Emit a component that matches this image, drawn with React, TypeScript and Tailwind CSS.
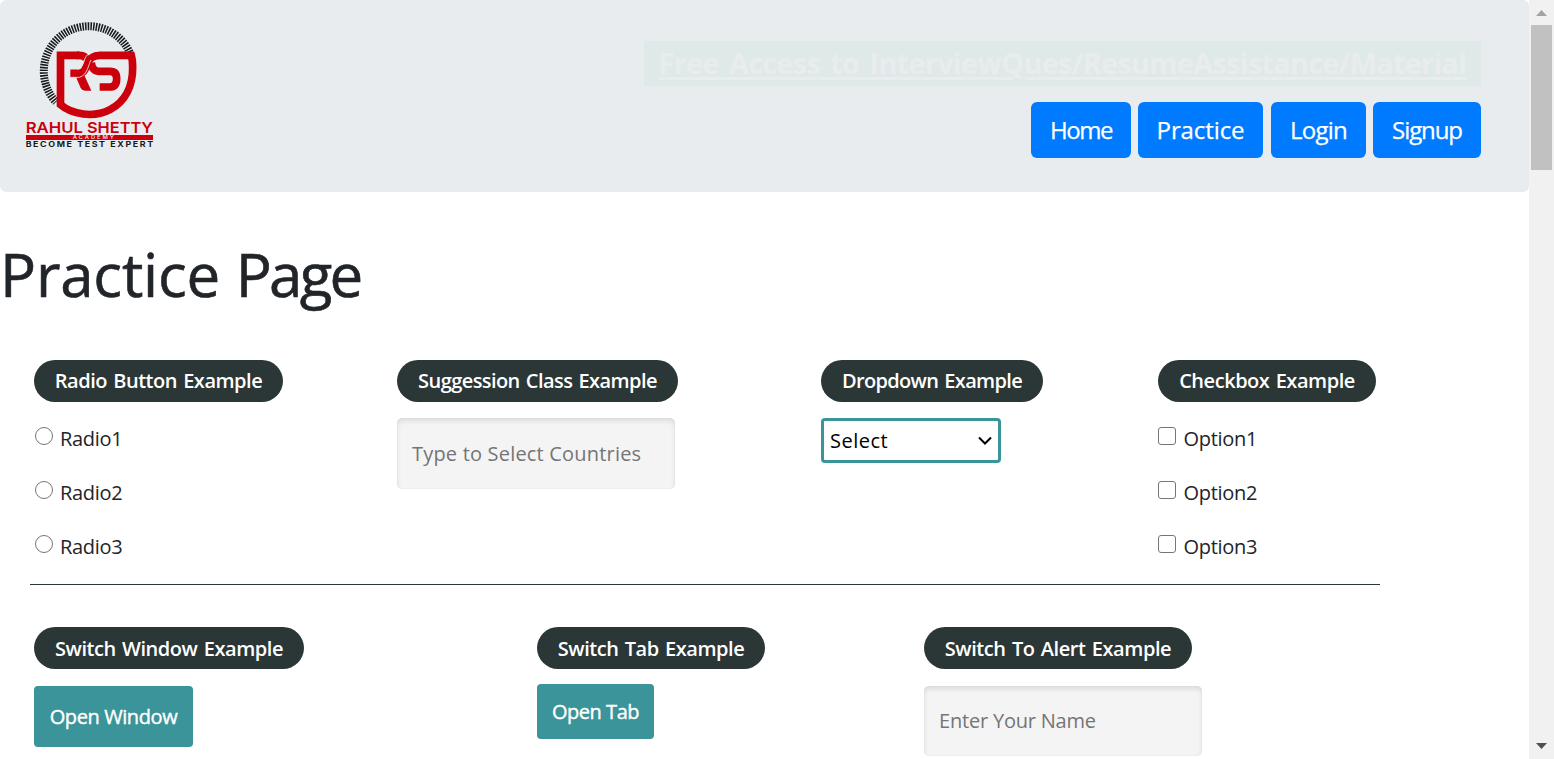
import type { ReactNode } from "react";

function Logo() {
  return (
    <svg
      className="ml-[10px] mt-[10px] h-[150px] w-[160px] shrink-0"
      viewBox="0 0 480 450"
      fontFamily="Inter, sans-serif"
    >
      <path
        d="M359 127 A135 135 0 1 0 138 276"
        fill="none"
        stroke="#17191b"
        strokeWidth="24"
        strokeDasharray="4.6 3.4"
      />
      <g fill="none" stroke="#cc000c" strokeWidth="23">
        <path d="M208 136 H151.500 V284 C185 313 250 325 300 299 C347 274 369 226 368 170 Q368 150 364 136 H270 C246 136 238 146 232 162 C226 181 220 190 204 190 H181" />
        <path d="M200 136 H208 Q227 136 230 150" />
        <path d="M244 158 Q247 184 266 184 H300 Q320 184 320 206 Q320 231 298 231 H269" />
      </g>
      <path d="M198 201 L223 196 L244 242 H226 Q216 242 212 234 Z" fill="#cc000c" />
      <path d="M243 150 C234 166 234 192 209 202 H181" fill="none" stroke="#e8ecef" strokeWidth="2.500" />
      <path d="M250 125 C228 130 224 147 219 162 Q213 178 203 178" fill="none" stroke="#e8ecef" strokeWidth="2.500" />
      <text x="47" y="369" fontSize="45" fontWeight="600" fill="#cc000c" textLength="172" lengthAdjust="spacingAndGlyphs">
        RAHUL
      </text>
      <text x="231" y="369" fontSize="45" fontWeight="600" fill="#cc000c" textLength="198" lengthAdjust="spacingAndGlyphs">
        SHETTY
      </text>
      <rect x="48" y="375" width="381" height="15" fill="#cc000c" />
      <text x="188" y="388" fontSize="15" fontWeight="600" fill="#f7dcde" letterSpacing="5" textLength="130" lengthAdjust="spacingAndGlyphs">
        ACADEMY
      </text>
      <text x="47" y="411" fontSize="22" fontWeight="700" fill="#17191b" letterSpacing="4" textLength="387" lengthAdjust="spacingAndGlyphs">
        BECOME TEST EXPERT
      </text>
    </svg>
  );
}

function NavButton({ className, children }: { className: string; children: ReactNode }) {
  return (
    <button
      className={`flex h-14 items-center justify-center whitespace-nowrap rounded-[6px] bg-[#007bff] text-[24px] text-white [-webkit-text-stroke:0.25px] ${className}`}
    >
      {children}
    </button>
  );
}

function Pill({ className, children }: { className: string; children: ReactNode }) {
  return (
    <div
      className={`flex h-[42px] items-center justify-center whitespace-nowrap rounded-full bg-[#2b3636] font-semibold text-white [word-spacing:1.5px] ${className}`}
    >
      {children}
    </div>
  );
}

function Choice({ type, label }: { type: "radio" | "checkbox"; label: string }) {
  return (
    <label className="flex h-[54px] items-start">
      <input
        type={type}
        name={type}
        className={`mt-[9px] h-[18px] w-[18px] shrink-0 appearance-none border-[1.5px] border-[#767676] bg-white ${
          type === "radio" ? "ml-px rounded-full" : "rounded-[3px]"
        }`}
      />
      <span className={`mt-[6px] leading-[30px] tracking-[-0.3px] ${type === "radio" ? "ml-[7px]" : "ml-[7.5px]"}`}>
        {label}
      </span>
    </label>
  );
}

const inputClass =
  "block w-[278px] rounded-[5px] bg-[#f4f4f4] pl-[15px] pr-2 text-[20px] placeholder:text-[#757575] placeholder:opacity-100 shadow-[inset_0_3px_5px_rgba(0,0,0,0.1),inset_0_0_2px_rgba(0,0,0,0.06)]";

const actionClass =
  "whitespace-nowrap rounded-[4px] bg-[#3a9499] text-white [-webkit-text-stroke:0.4px]";

function Scrollbar() {
  return (
    <div className="flex h-full w-[25px] shrink-0 flex-col items-center bg-[#f1f1f1]">
      <svg className="h-[25px] w-[25px] shrink-0" viewBox="0 0 25 25">
        <path d="M7 16 L12.500 10 L18 16 Z" fill="#a3a3a3" />
      </svg>
      <div className="h-[145px] w-[21px] bg-[#c1c1c1]" />
      <svg className="mt-auto h-[25px] w-[25px] shrink-0" viewBox="0 0 25 25">
        <path d="M7 9 H18 L12.500 15 Z" fill="#505050" />
      </svg>
    </div>
  );
}

export default function App() {
  return (
    <div className="flex h-[759px] w-[1554px] overflow-hidden bg-white font-['Open_Sans',sans-serif] text-[20px] text-[#212529]">
      <div className="flex min-w-0 flex-1 flex-col">
        <header className="flex h-48 shrink-0 justify-between rounded-[6px] bg-[#e8ecef] pr-12">
          <Logo />
          <div className="mt-[41px] flex flex-col items-end">
            <div className="flex h-[45px] w-[837px] items-center justify-center whitespace-nowrap bg-[#dfe9e8] pb-px text-[28.8px] font-bold tracking-[-0.69px] text-[#e9ecef] underline decoration-[3px] underline-offset-[3px] [word-spacing:3.5px]">
              Free Access to InterviewQues/ResumeAssistance/Material
            </div>
            <nav className="mt-4 flex">
              <NavButton className="w-[100px] tracking-[-1.4px]">Home</NavButton>
              <NavButton className="ml-[7px] w-[125px] tracking-[-0.1px]">Practice</NavButton>
              <NavButton className="ml-[8px] w-[95px] tracking-[-0.75px]">Login</NavButton>
              <NavButton className="ml-[7px] w-[108px] tracking-[-1.1px]">Signup</NavButton>
            </nav>
          </div>
        </header>

        <h1 className="mt-[46px] h-[72px] text-[60px] leading-[72px] [-webkit-text-stroke:0.6px]">
          <span className="tracking-[-0.2px]">Practice</span>{" "}
          <span className="tracking-[-2.7px]">Page</span>
        </h1>

        <section className="ml-[30px] mt-[50px] grid h-[225px] w-[1350px] shrink-0 grid-cols-[363px_424px_337px_1fr] border-b border-[#2b3636] pl-1">
          <div>
            <Pill className="mb-4 w-[249px] tracking-[-0.48px]">Radio Button Example</Pill>
            <Choice type="radio" label="Radio1" />
            <Choice type="radio" label="Radio2" />
            <Choice type="radio" label="Radio3" />
          </div>
          <div>
            <Pill className="mb-4 w-[281px] tracking-[-0.57px]">Suggession Class Example</Pill>
            <input className={`h-[71px] tracking-[0.19px] ${inputClass}`} placeholder="Type to Select Countries" />
          </div>
          <div>
            <Pill className="mb-4 w-[222px] tracking-[-0.66px]">Dropdown Example</Pill>
            <button className="flex h-[45px] w-[180px] items-center justify-between rounded-[4px] border-[3px] border-[#3a9499] bg-white pl-[6px] pr-[6px] tracking-[0.5px] text-black">
              <span>Select</span>
              <svg className="h-[10px] w-[14px]" viewBox="0 0 14 10">
                <path d="M1 1.500 L7 7.500 L13 1.500" fill="none" stroke="#000" strokeWidth="2" />
              </svg>
            </button>
          </div>
          <div>
            <Pill className="mb-4 w-[218px] tracking-[-0.46px]">Checkbox Example</Pill>
            <Choice type="checkbox" label="Option1" />
            <Choice type="checkbox" label="Option2" />
            <Choice type="checkbox" label="Option3" />
          </div>
        </section>

        <section className="ml-[34px] mt-[42px] grid grid-cols-[503px_387px_1fr]">
          <div>
            <Pill className="w-[270px] pt-[2px] tracking-[-0.45px]">Switch Window Example</Pill>
            <button className={`mt-[17px] h-[61px] w-[159px] tracking-[-0.4px] ${actionClass}`}>Open Window</button>
          </div>
          <div>
            <Pill className="w-[228px] pt-[2px] tracking-[-0.45px]">Switch Tab Example</Pill>
            <button className={`mt-[15px] h-[55px] w-[117px] tracking-[-0.45px] ${actionClass}`}>Open Tab</button>
          </div>
          <div>
            <Pill className="w-[268px] pt-[2px] tracking-[-0.43px]">Switch To Alert Example</Pill>
            <input className={`mt-[17px] h-[70px] pb-[2px] tracking-[-0.2px] ${inputClass}`} placeholder="Enter Your Name" />
          </div>
        </section>
      </div>
      <Scrollbar />
    </div>
  );
}
